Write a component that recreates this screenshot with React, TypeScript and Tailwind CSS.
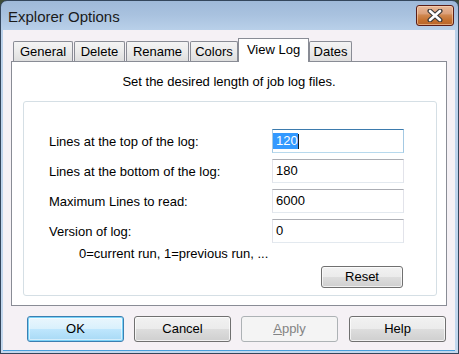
const font = "font-['Liberation_Sans',Arial,sans-serif]";

const tabs = [
  { label: "General", w: "w-[60px] mr-[1px]" },
  { label: "Delete", w: "w-[51px] mr-[1px]" },
  { label: "Rename", w: "w-[63px] mr-[1px]" },
  { label: "Colors", w: "w-[48px]" },
  { label: "View Log", w: "w-[71px]", active: true },
  { label: "Dates", w: "w-[43px]" },
];

const rows = [
  { label: "Lines at the top of the log:", value: "120", focused: true },
  { label: "Lines at the bottom of the log:", value: "180" },
  { label: "Maximum Lines to read:", value: "6000" },
  { label: "Version of log:", value: "0" },
];

function CloseButton() {
  return (
    <div className="mt-[4px] mr-[4px] flex h-[21px] w-[38px] items-center justify-center rounded-[3px] border border-[#5b1d17] bg-[linear-gradient(to_bottom,#e9b899_0%,#dca07a_40%,#d08850_48%,#c4702f_75%,#b8652a_100%)] shadow-[inset_0_0_0_1px_rgba(255,220,190,0.55)]">
      <svg width="16" height="13" viewBox="0 0 16 13">
        <path d="M3 2 L13 11 M13 2 L3 11" stroke="#3a3a3a" strokeWidth="5" strokeLinecap="round" />
        <path d="M3 2 L13 11 M13 2 L3 11" stroke="#ffffff" strokeWidth="2.6" strokeLinecap="round" />
      </svg>
    </div>
  );
}

function Field({ value, focused }: { value: string; focused?: boolean }) {
  if (focused) {
    return (
      <div className="flex h-[24px] w-[132px] items-center border border-t-[#3d7bad] border-x-[#a4c9e3] border-b-[#b7d9ed] bg-white">
        <span className="bg-[#3399ff] pl-[3px] text-[13px] leading-[16px] text-white">{value}</span>
        <span className="h-[15px] w-[1px] bg-[#1a1a1a]" />
      </div>
    );
  }
  return (
    <div className="flex h-[24px] w-[132px] items-center border border-t-[#abadb3] border-x-[#e2e3ea] border-b-[#e3e9ef] bg-white pl-[3px] text-[13px] leading-[16px] text-black">
      {value}
    </div>
  );
}

function Button({ children, kind = "normal", className = "" }: { children: React.ReactNode; kind?: "normal" | "default" | "disabled"; className?: string }) {
  const styles = {
    normal:
      "border-[#707070] bg-[linear-gradient(to_bottom,#f2f2f2_0%,#ebebeb_50%,#dddddd_51%,#cfcfcf_100%)] text-black shadow-[inset_0_0_0_1px_rgba(255,255,255,0.7)]",
    default:
      "border-[#3c7fb1] bg-[linear-gradient(to_bottom,#eaf6fd_0%,#d9f0fc_50%,#bee6fd_51%,#a7d9f5_100%)] text-black shadow-[inset_0_0_0_1px_#7ad2f7,inset_0_0_0_2px_rgba(255,255,255,0.5)]",
    disabled: "border-[#adb2b5] bg-[#f4f4f4] text-[#838383]",
  }[kind];
  return (
    <div className={`flex items-center justify-center rounded-[3px] border text-[13px] leading-[16px] ${styles} ${className}`}>
      {children}
    </div>
  );
}

export default function App() {
  return (
    <div className={`h-[354px] w-[459px] bg-[#3e4b38] ${font}`}>
      <div className="flex h-full w-full flex-col rounded-t-[7px] border border-[#34465c] bg-[linear-gradient(to_bottom,#9fb9d9_0px,#a9c2df_14px,#bad1ea_30px,#c3d8ee_100%)]">
        <div className="flex h-[29px] items-start justify-between">
          <div className="ml-[7px] mt-[7px] text-[15px] leading-[18px] text-[#1a1a1a]">Explorer Options</div>
          <CloseButton />
        </div>

        <div className="mb-[2px] ml-[2px] mr-[3px] flex flex-1 flex-col border-b border-[#4aa0dc] bg-[#f5f1f5] pt-[8px]">
          <div className="ml-[8px] w-[436px]">
            <div className="flex h-[23px] items-end pl-[2px]">
              {tabs.map((t) =>
                t.active ? (
                  <div
                    key={t.label}
                    className={`relative z-10 -mb-[1px] flex h-[24px] ${t.w} justify-center border border-b-0 border-[#898c95] bg-white pt-[3px] text-[13px] leading-[16px] text-black`}
                  >
                    {t.label}
                  </div>
                ) : (
                  <div
                    key={t.label}
                    className={`flex h-[20px] ${t.w} items-center justify-center rounded-t-[2px] border border-b-0 border-[#898c95] bg-[linear-gradient(to_bottom,#f4f4f4_0%,#ebebeb_50%,#dedede_100%)] text-[13px] leading-[16px] text-black`}
                  >
                    {t.label}
                  </div>
                )
              )}
            </div>

            <div className="flex h-[245px] flex-col border border-[#898c95] bg-white">
              <div className="pt-[12px] text-center text-[13px] leading-[16px] text-black">
                Set the desired length of job log files.
              </div>
              <div className="ml-[11px] mt-[11px] flex h-[195px] w-[414px] flex-col rounded-[3px] border border-[#d5dfe5] pl-[25px] pt-[27px]">
                <div className="flex flex-col gap-[6px]">
                  {rows.map((r) => (
                    <div key={r.label} className="flex items-center">
                      <div className="w-[223px] pt-[2px] text-[13px] leading-[16px] text-black">{r.label}</div>
                      <Field value={r.value} focused={r.focused} />
                    </div>
                  ))}
                </div>
                <div className="mt-[3px] pl-[30px] text-[13px] leading-[15px] text-black">
                  0=current run, 1=previous run, ...
                </div>
                <Button className="ml-[272px] mt-[5px] h-[22px] w-[82px]">Reset</Button>
              </div>
            </div>
          </div>

          <div className="ml-[24px] mt-[10px] flex gap-[10px]">
            <Button kind="default" className="h-[26px] w-[97px]">OK</Button>
            <Button className="h-[26px] w-[97px]">Cancel</Button>
            <Button kind="disabled" className="h-[26px] w-[97px]">
              <span><span className="underline">A</span>pply</span>
            </Button>
            <Button className="ml-[1px] h-[26px] w-[97px]">Help</Button>
          </div>
        </div>
      </div>
    </div>
  );
}
